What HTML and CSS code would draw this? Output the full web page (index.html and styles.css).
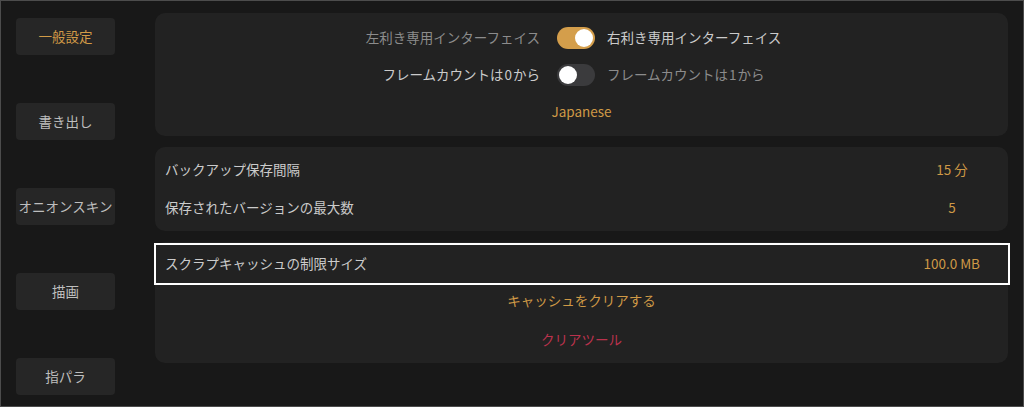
FILE: index.html
```html
<!DOCTYPE html>
<html lang="ja">
<head>
<meta charset="utf-8">
<link rel="stylesheet" href="styles.css">
</head>
<body>
<div class="app">
  <nav class="sidebar">
    <div class="navbtn active">一般設定</div>
    <div class="navbtn">書き出し</div>
    <div class="navbtn">オニオンスキン</div>
    <div class="navbtn">描画</div>
    <div class="navbtn">指パラ</div>
  </nav>
  <main class="main">
    <section class="panel panel-ui">
      <div class="trow">
        <span class="tlabel left dim">左利き専用インターフェイス</span>
        <span class="toggle on"><span class="knob"></span></span>
        <span class="tlabel right">右利き専用インターフェイス</span>
      </div>
      <div class="trow">
        <span class="tlabel left">フレームカウントは<span class="num">0</span>から</span>
        <span class="toggle"><span class="knob"></span></span>
        <span class="tlabel right dim">フレームカウントは<span class="num">1</span>から</span>
      </div>
      <div class="crow gold">Japanese</div>
    </section>
    <section class="panel panel-backup">
      <div class="vrow">
        <span class="label">バックアップ保存間隔</span>
        <span class="value">15&nbsp;分</span>
      </div>
      <div class="vrow">
        <span class="label">保存されたバージョンの最大数</span>
        <span class="value">5</span>
      </div>
    </section>
    <section class="panel panel-cache">
      <div class="selrow">
        <span class="label">スクラプキャッシュの制限サイズ</span>
        <span class="value-r">100.0 MB</span>
      </div>
      <div class="action gold a1">キャッシュをクリアする</div>
      <div class="action red a2">クリアツール</div>
    </section>
  </main>
</div>
</body>
</html>
```

FILE: styles.css
```css
* { box-sizing: border-box; }
html, body { margin: 0; padding: 0; }
body {
  width: 1024px;
  height: 407px;
  background: #181818;
  font-family: "Noto Sans CJK JP", "Noto Sans", sans-serif;
  font-size: 13.5px;
  font-weight: 400;
  color: #cbcbcb;
  overflow: hidden;
}
.app {
  width: 1024px;
  height: 407px;
  border: 1px solid #4c4c4c;
  display: flex;
}
.sidebar {
  width: 154px;
  flex: none;
  padding: 17px 0 0 15px;
  display: flex;
  flex-direction: column;
  gap: 48px;
}
.navbtn {
  width: 99px;
  height: 37px;
  border-radius: 4px;
  background: #262626;
  color: #bebebe;
  display: flex;
  align-items: center;
  justify-content: center;
  white-space: nowrap;
  line-height: 1;
}
.navbtn.active { color: #d29b47; }
.main {
  flex: 1;
  padding: 12px 15px 0 0;
  display: flex;
  flex-direction: column;
  gap: 11px;
}
.panel {
  background: #222222;
  border-radius: 10px;
}
.panel-ui { height: 123px; padding: 6px 0; }
.trow {
  height: 37px;
  display: grid;
  grid-template-columns: 1fr auto 1fr;
  align-items: center;
  padding-right: 11px;
  line-height: 1;
}
.tlabel { white-space: nowrap; }
.tlabel.left { text-align: right; padding-right: 17px; }
.tlabel.right { text-align: left; padding-left: 12px; }
.num { padding: 0 1px; }
.dim { color: #8c8c8c; }
.toggle {
  width: 38px;
  height: 22px;
  border-radius: 11px;
  background: #3b3b3d;
  position: relative;
  display: block;
}
.toggle.on { background: #d49e4b; }
.knob {
  position: absolute;
  top: 2px;
  left: 2px;
  width: 18px;
  height: 18px;
  border-radius: 50%;
  background: #ffffff;
}
.toggle.on .knob { left: 18px; }
.crow {
  height: 37px;
  display: flex;
  align-items: center;
  justify-content: center;
  line-height: 1;
}
.gold { color: #cf9946; }
.red { color: #bb324d; }
.panel-backup { height: 84px; padding: 4px 26px 4px 10px; }
.vrow {
  height: 38px;
  display: flex;
  align-items: center;
  justify-content: space-between;
  line-height: 1;
}
.value { width: 60px; text-align: center; color: #cf9946; }
.panel-cache {
  height: 121px;
  padding-top: 1px;
  display: flex;
  flex-direction: column;
}
.selrow {
  height: 42px;
  margin: 0 -2px 0 -1px;
  border: 2px solid #ffffff;
  background: #222222;
  display: flex;
  align-items: center;
  justify-content: space-between;
  padding: 0 28px 0 9px;
  line-height: 1;
}
.value-r { color: #cf9946; }
.action {
  display: flex;
  align-items: center;
  justify-content: center;
  line-height: 1;
}
.a1 { height: 32px; }
.a2 { height: 46px; }
```
